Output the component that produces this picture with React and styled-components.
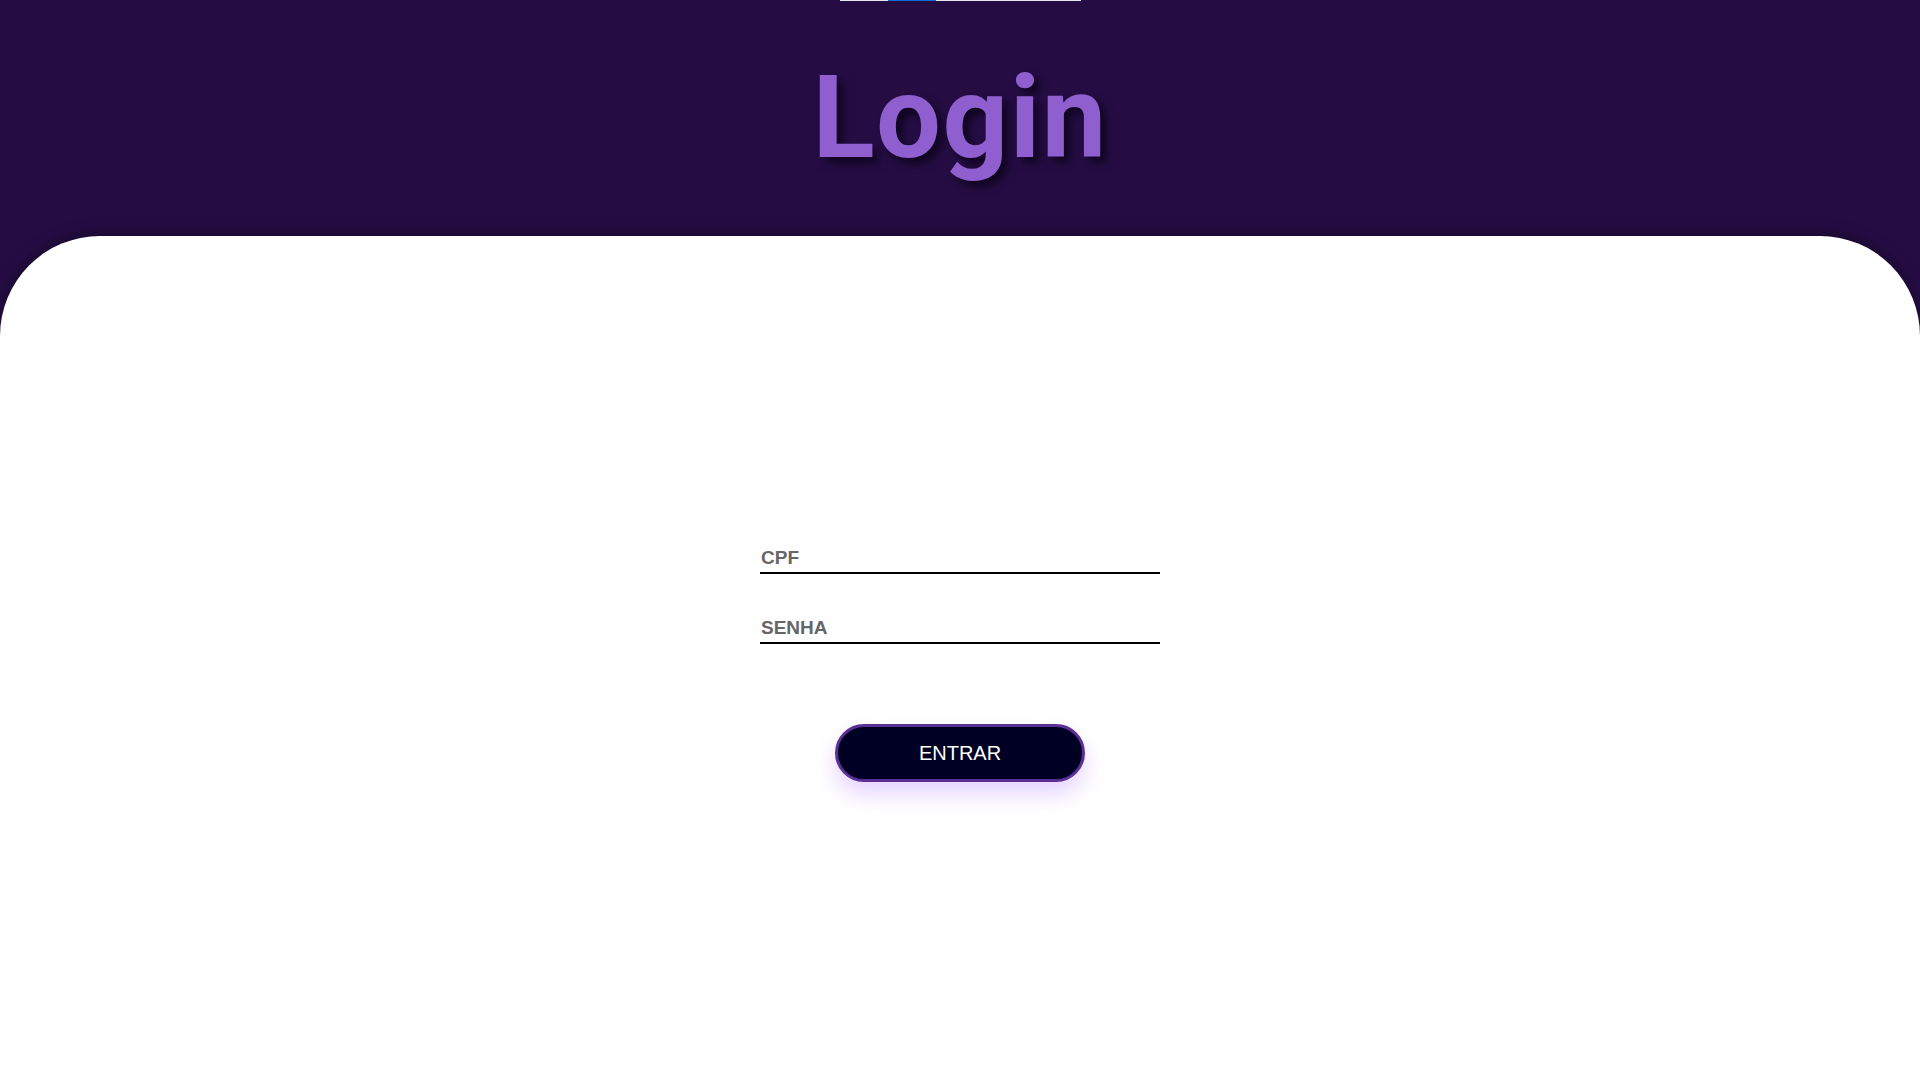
import React from "react";
import styled, { createGlobalStyle } from "styled-components";

const GlobalStyle = createGlobalStyle`
  html, body {
    margin: 0;
    padding: 0;
    background: #250d44;
  }
  * {
    box-sizing: border-box;
  }
`;

function App() {
  return (
    <Page>
      <GlobalStyle />
      <TopStrip>
        <StripPart w={48} />
        <StripPart w={48} active />
        <StripPart w={145} />
      </TopStrip>
      <Header>
        <Title>Login</Title>
      </Header>
      <Panel>
        <Form onSubmit={e => e.preventDefault()}>
          <Field type="text" placeholder="CPF" />
          <Field type="password" placeholder="SENHA" />
          <Button type="submit">ENTRAR</Button>
        </Form>
      </Panel>
    </Page>
  );
}

export default App;

const Page = styled.div`
  width: 100%;
  min-height: 100vh;
  display: flex;
  flex-direction: column;
  background: #250d44;
`;

const TopStrip = styled.div`
  display: flex;
  justify-content: center;
  height: 1px;
  padding-left: 1px;
`;

const StripPart = styled.div`
  width: ${props => props.w}px;
  height: 1px;
  background: ${props => (props.active ? "#0a6ad6" : "#e8e8ee")};
`;

const Header = styled.header`
  height: 235px;
  display: flex;
  justify-content: center;
  padding-top: 50px;
`;

const Title = styled.h1`
  margin: 0;
  font-family: Roboto, "Noto Sans", sans-serif;
  font-weight: 700;
  font-size: 115px;
  line-height: 134px;
  letter-spacing: 1.5px;
  color: #8f5fd0;
  text-shadow: 6px 6px 8px rgba(10, 2, 20, 0.75);
`;

const Panel = styled.main`
  flex: 1;
  background: #ffffff;
  border-radius: 100px 100px 0 0;
  box-shadow: 0 -4px 14px rgba(0, 0, 0, 0.35);
  display: flex;
  justify-content: center;
  padding-top: 308px;
`;

const Form = styled.form`
  width: 400px;
  display: flex;
  flex-direction: column;
  align-items: center;
  gap: 40px;
`;

const Field = styled.input`
  width: 400px;
  height: 30px;
  padding: 0 0 0 1px;
  border: none;
  border-bottom: 2px solid #000;
  outline: none;
  background: transparent;
  font-family: "Liberation Sans", Arial, sans-serif;
  font-weight: 700;
  font-size: 19px;
  color: #333;
  &::placeholder {
    color: #666666;
  }
`;

const Button = styled.button`
  margin-top: 40px;
  width: 250px;
  height: 58px;
  border-radius: 29px;
  border: 3px solid #5b2f93;
  background: #000024;
  color: #ffffff;
  font-family: "Liberation Sans", Arial, sans-serif;
  font-size: 20px;
  cursor: pointer;
  box-shadow: 0 12px 22px rgba(170, 110, 255, 0.3);
`;
